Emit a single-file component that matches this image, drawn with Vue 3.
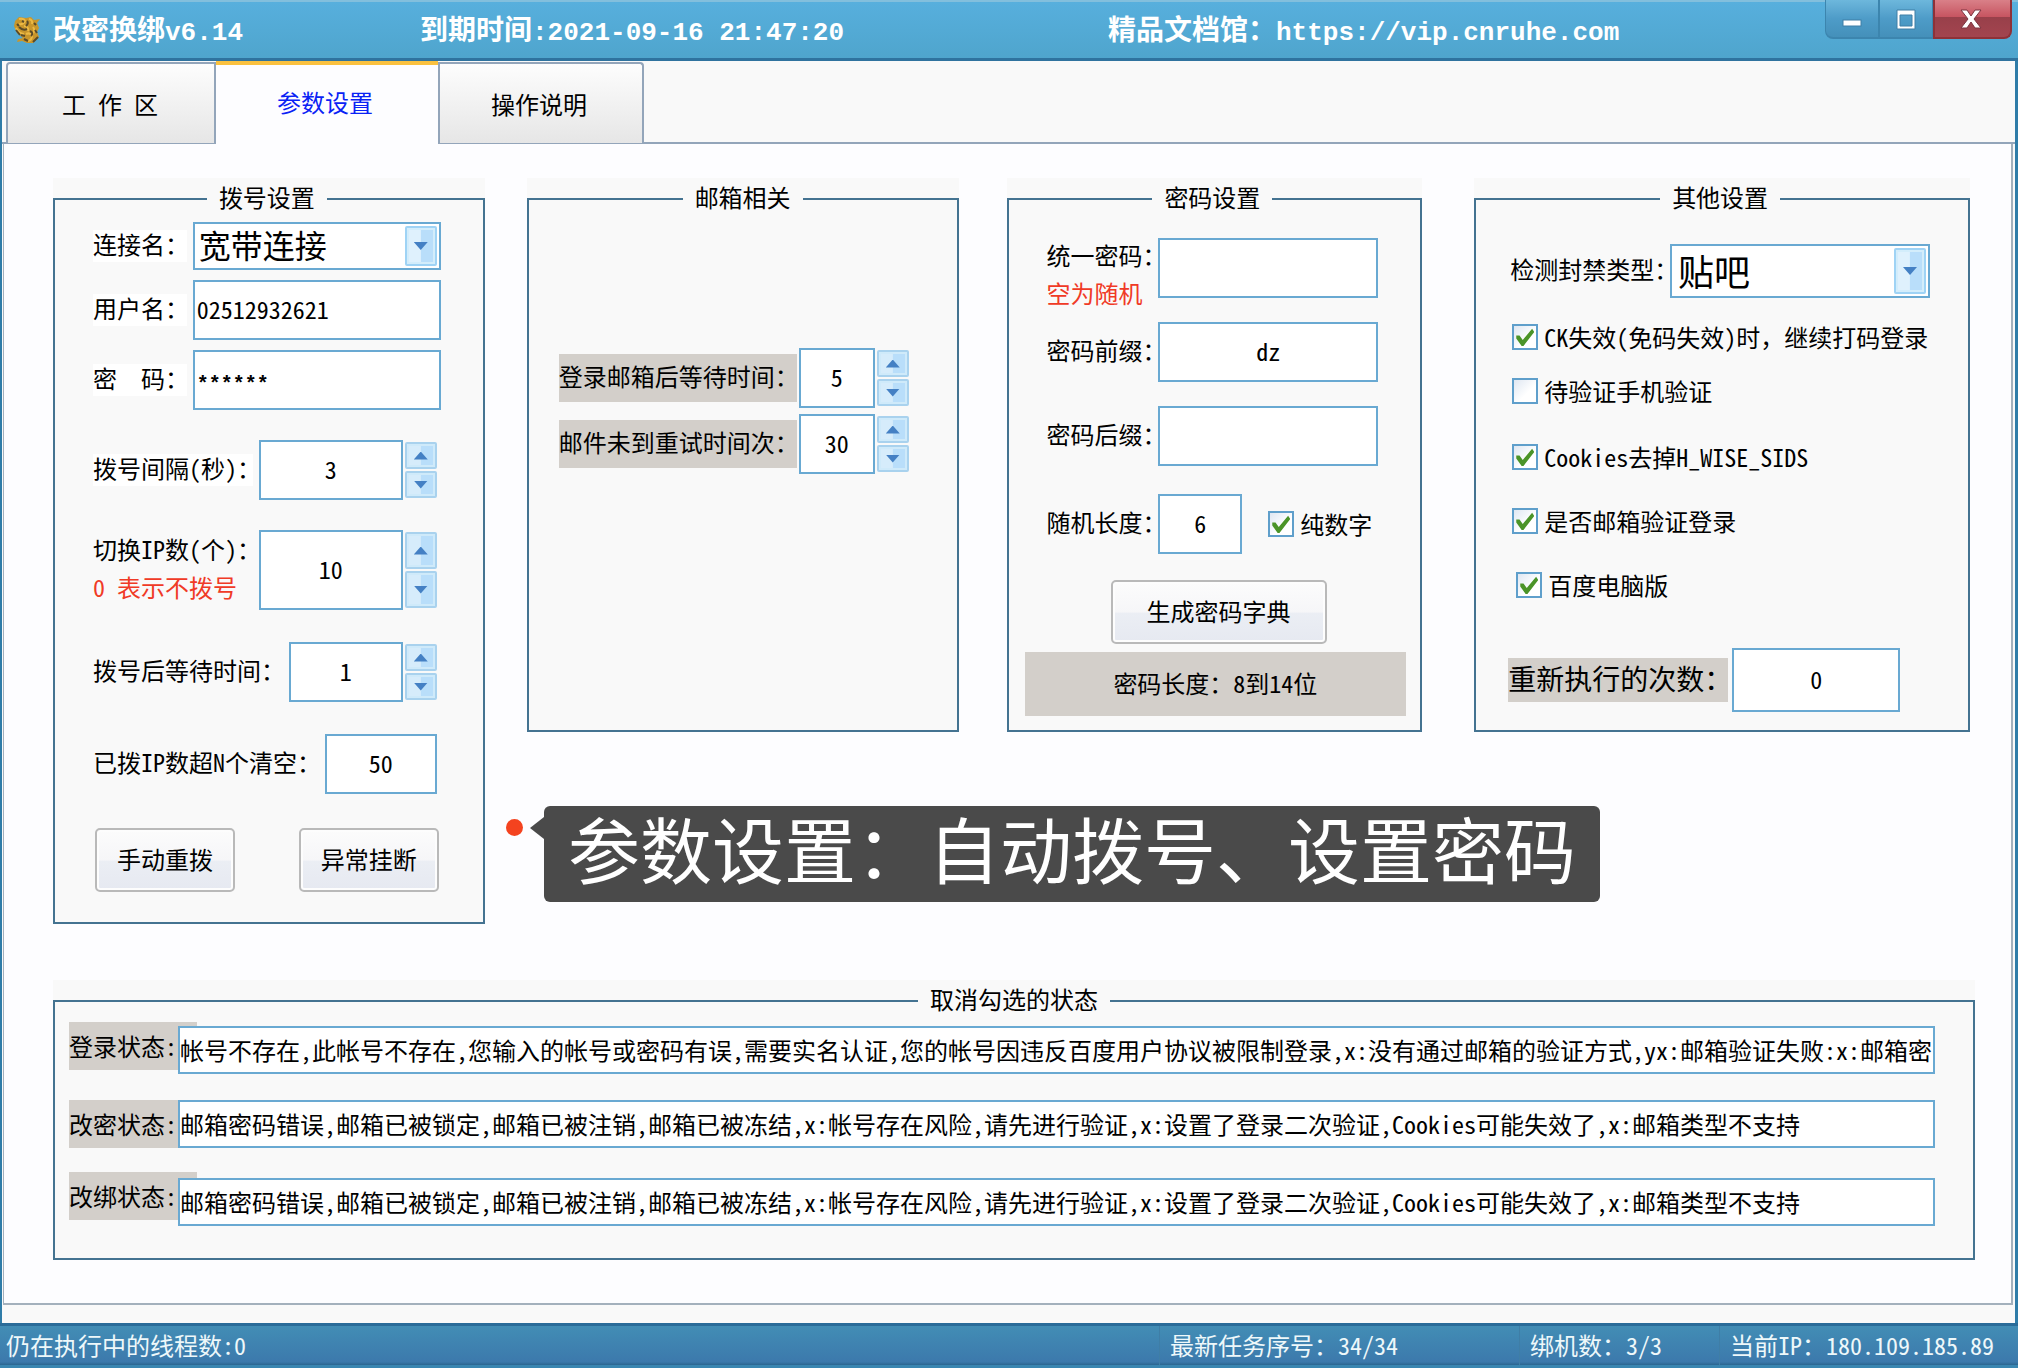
<script setup>
import { ref, reactive } from 'vue'

const tabs = ['工 作 区', '参数设置', '操作说明']
const active = ref(1)

const dial = reactive({
  name: '宽带连接',
  user: '02512932621',
  pass: '******',
  interval: '3',
  switchCount: '10',
  wait: '1',
  clearAfter: '50'
})
const mail = reactive({ wait: '5', retry: '30' })
const pwd = reactive({ same: '', prefix: 'dz', suffix: '', len: '6', digits: true })
const other = reactive({ type: '贴吧', reruns: '0' })
const options = reactive([
  { parts: ['CK失效(免码失效)', '时，继续打码登录'], on: true, mod: 'first' },
  { parts: ['待验证手机验证'], on: false, mod: 'near' },
  { parts: ['Cookies去掉H_WISE_SIDS'], on: true, mod: '' },
  { parts: ['是否邮箱验证登录'], on: true, mod: '' },
  { parts: ['百度电脑版'], on: true, mod: 'inset' }
])
const failText = '邮箱密码错误,邮箱已被锁定,邮箱已被注销,邮箱已被冻结,x:帐号存在风险，请先进行验证,x:设置了登录二次验证,Cookies可能失效了,x:邮箱类型不支持'
const states = reactive([
  {
    label: '登录状态:',
    value: '帐号不存在,此帐号不存在,您输入的帐号或密码有误,需要实名认证,您的帐号因违反百度用户协议被限制登录,x:没有通过邮箱的验证方式,yx:邮箱验证失败:x:邮箱密'
  },
  { label: '改密状态:', value: failText },
  { label: '改绑状态:', value: failText }
])

function step(group, key, by) {
  group[key] = String(Math.max(0, Number(group[key]) + by))
}
</script>

<template>
  <div class="window">
    <header class="titlebar">
      <svg class="logo" viewBox="0 0 28 28" aria-hidden="true">
        <path d="M2 5 L6 1 L13 2 L18 1 L21 4 L27 3 L24 7 L26 12 L24 16 L26 21 L20 27 L14 27 L9 25 L4 26 L5 23 L10 22 L4 17 L1 10 Z" fill="#c8962c" />
        <path d="M6 3 q5-1 6 2 q-2 4-6 3 M16 3 q4 1 3 5 M11 10 q5 0 4 5 M20 11 q3 4-1 7 M13 18 q4-2 6 2 q0 4-4 5 M3 12 q3 6 8 6" fill="none" stroke="#ecb944" stroke-width="2" />
        <path d="M9 5 l2 1 M14 5 q2 2-1 5 M6 11 q4 4 8 2 M17 15 q4 2 1 5 M4 8 l2 2 M21 7 l2 2 M22 14 l2 3 M11 23 l4 2 M8 19 l4 1 M3 14 l4 5 M20 26 l5-5" fill="none" stroke="#5a4a28" stroke-width="2" />
      </svg>
      <h1 class="app-name">改密换绑<span class="mono">v6.14</span></h1>
      <p class="expiry">到期时间<span class="mono">:2021-09-16 21:47:20</span></p>
      <p class="site">精品文档馆：<a class="mono" href="https://vip.cnruhe.com">https://vip.cnruhe.com</a></p>
      <div class="win-buttons">
        <button type="button" aria-label="最小化">
          <svg width="24" height="24" viewBox="0 0 24 24"><rect x="3" y="13" width="18" height="6" fill="#fff" stroke="#3f7fa6" /></svg>
        </button>
        <button type="button" aria-label="最大化">
          <svg width="24" height="24" viewBox="0 0 24 24"><path d="M3 3h18v19H3z M6 8v11h12V8z" fill="#fff" fill-rule="evenodd" stroke="#3f7fa6" /></svg>
        </button>
        <button type="button" class="close" aria-label="关闭">
          <svg width="24" height="24" viewBox="0 0 24 24"><path d="M2 3h6l4 6 4-6h6l-7 9 7 9h-6l-4-6-4 6H2l7-9z" fill="#fff" stroke="#7c3540" /></svg>
        </button>
      </div>
    </header>

    <nav class="tabs">
      <button
        v-for="(t, i) in tabs"
        :key="t"
        type="button"
        class="tab"
        :class="{ active: active === i }"
        @click="active = i"
      >{{ t }}</button>
    </nav>

    <main class="page">
      <div class="columns">
        <section class="panel dial">
          <fieldset>
            <legend>拨号设置</legend>
            <div class="row">
              <label class="lit" for="d-name">连接名：</label>
              <span class="combo w-text">
                <select id="d-name" v-model="dial.name"><option>宽带连接</option></select>
                <span class="drop"></span>
              </span>
            </div>
            <div class="row gap-10">
              <label class="lit" for="d-user">用户名：</label>
              <input id="d-user" v-model="dial.user" class="field w-text" type="text">
            </div>
            <div class="row gap-10">
              <label class="lit full" for="d-pass">密　码：</label>
              <input id="d-pass" v-model="dial.pass" class="field w-text stars" type="text">
            </div>
            <div class="row num gap-30">
              <label class="lit" for="d-int">拨号间隔(秒)：</label>
              <input id="d-int" v-model="dial.interval" class="field center w-144" type="text">
              <span class="spin">
                <button type="button" aria-label="增加" @click="step(dial, 'interval', 1)"></button>
                <button type="button" aria-label="减少" class="down" @click="step(dial, 'interval', -1)"></button>
              </span>
            </div>
            <div class="row num tall gap-30">
              <label class="stack" for="d-sw"><span>切换IP数(个)：</span><span class="red">0 表示不拨号</span></label>
              <input id="d-sw" v-model="dial.switchCount" class="field center w-144" type="text">
              <span class="spin">
                <button type="button" aria-label="增加" @click="step(dial, 'switchCount', 1)"></button>
                <button type="button" aria-label="减少" class="down" @click="step(dial, 'switchCount', -1)"></button>
              </span>
            </div>
            <div class="row num gap-32">
              <label for="d-wait">拨号后等待时间：</label>
              <input id="d-wait" v-model="dial.wait" class="field center w-114" type="text">
              <span class="spin">
                <button type="button" aria-label="增加" @click="step(dial, 'wait', 1)"></button>
                <button type="button" aria-label="减少" class="down" @click="step(dial, 'wait', -1)"></button>
              </span>
            </div>
            <div class="row num gap-32">
              <label for="d-clear">已拨IP数超N个清空：</label>
              <input id="d-clear" v-model="dial.clearAfter" class="field center w-112" type="text">
            </div>
            <div class="row buttons">
              <button type="button" class="btn">手动重拨</button>
              <button type="button" class="btn">异常挂断</button>
            </div>
          </fieldset>
        </section>

        <section class="panel mail">
          <fieldset>
            <legend>邮箱相关</legend>
            <div class="row">
              <label class="grey" for="m-wait">登录邮箱后等待时间：</label>
              <input id="m-wait" v-model="mail.wait" class="field center w-76" type="text">
              <span class="spin">
                <button type="button" aria-label="增加" @click="step(mail, 'wait', 1)"></button>
                <button type="button" aria-label="减少" class="down" @click="step(mail, 'wait', -1)"></button>
              </span>
            </div>
            <div class="row">
              <label class="grey" for="m-retry">邮件未到重试时间次：</label>
              <input id="m-retry" v-model="mail.retry" class="field center w-76" type="text">
              <span class="spin">
                <button type="button" aria-label="增加" @click="step(mail, 'retry', 1)"></button>
                <button type="button" aria-label="减少" class="down" @click="step(mail, 'retry', -1)"></button>
              </span>
            </div>
          </fieldset>
        </section>

        <section class="panel pwd">
          <fieldset>
            <legend>密码设置</legend>
            <div class="row top">
              <label class="stack" for="p-same"><span>统一密码：</span><span class="red">空为随机</span></label>
              <input id="p-same" v-model="pwd.same" class="field center w-220" type="text">
            </div>
            <div class="row gap-24">
              <label for="p-pre">密码前缀：</label>
              <input id="p-pre" v-model="pwd.prefix" class="field center w-220" type="text">
            </div>
            <div class="row gap-24">
              <label for="p-suf">密码后缀：</label>
              <input id="p-suf" v-model="pwd.suffix" class="field center w-220" type="text">
            </div>
            <div class="row gap-28">
              <label for="p-len">随机长度：</label>
              <input id="p-len" v-model="pwd.len" class="field center w-84" type="text">
              <label class="check"><input v-model="pwd.digits" type="checkbox">纯数字</label>
            </div>
            <button type="button" class="btn generate">生成密码字典</button>
            <p class="band">密码长度：8到14位</p>
          </fieldset>
        </section>

        <section class="panel other">
          <fieldset>
            <legend>其他设置</legend>
            <div class="row">
              <label for="o-type">检测封禁类型：</label>
              <span class="combo large">
                <select id="o-type" v-model="other.type"><option>贴吧</option></select>
                <span class="drop"></span>
              </span>
            </div>
            <label v-for="o in options" :key="o.parts[0]" class="check option" :class="o.mod">
              <input v-model="o.on" type="checkbox">
              <span>{{ o.parts[0] }}<span v-if="o.parts[1]" class="full">{{ o.parts[1] }}</span></span>
            </label>
            <div class="row rerun">
              <label class="grey" for="o-re">重新执行的次数：</label>
              <input id="o-re" v-model="other.reruns" class="field center w-168" type="text">
            </div>
          </fieldset>
        </section>
      </div>

      <section class="panel states">
        <fieldset>
          <legend>取消勾选的状态</legend>
          <div v-for="(s, i) in states" :key="s.label" class="state">
            <label class="grey" :for="'state-' + i">{{ s.label }}</label>
            <input :id="'state-' + i" v-model="s.value" class="field" type="text">
          </div>
        </fieldset>
      </section>

      <div class="callout"><i class="dot"></i><i class="arrow"></i>参数设置：自动拨号、设置密码</div>
    </main>

    <footer class="status">
      <span class="threads">仍在执行中的线程数:0</span>
      <span class="cell task">最新任务序号：34/34</span>
      <span class="cell bound">绑机数：3/3</span>
      <span class="cell ip">当前IP：180.109.185.89</span>
    </footer>
  </div>
</template>

<style>
body {
  margin: 0;
}
</style>

<style scoped>
.window,
.window * {
  box-sizing: border-box;
}
.window {
  display: flex;
  flex-direction: column;
  min-height: 100vh;
  border: solid #2f7ca8;
  border-width: 0 3px 0 2px;
  background: #f9f9f9;
  color: #000;
  font: 24px/28px "Noto Sans CJK SC", sans-serif;
  /* Latin letters and digits take half the width of a Chinese character */
  font-feature-settings: "hwid";
}
.full {
  font-feature-settings: normal;
}
h1,
p {
  margin: 0;
}
button,
input,
select {
  margin: 0;
  padding: 0;
  border: 0;
  border-radius: 0;
  color: inherit;
  font: inherit;
  font-feature-settings: inherit;
}

/* title bar */
.titlebar {
  position: relative;
  display: flex;
  align-items: center;
  height: 61px;
  margin: 0 -3px 0 -2px;
  padding-left: 13px;
  border-top: 2px solid #82bfdd;
  border-bottom: 3px solid #2f739f;
  background: linear-gradient(#57afdd, #4fa5cd);
  color: #fff;
  white-space: nowrap;
}
.logo {
  width: 28px;
  height: 28px;
  margin-right: 12px;
}
.app-name,
.expiry,
.site {
  font-size: 28px;
  font-weight: 700;
  line-height: 40px;
}
.app-name {
  flex: 0 0 367px;
}
.expiry {
  flex: 0 0 688px;
}
.mono {
  color: inherit;
  font-family: "Liberation Mono", monospace;
  font-size: 26px;
  text-decoration: none;
}
.win-buttons {
  position: absolute;
  top: -2px;
  right: 6px;
  display: flex;
  height: 39px;
}
.win-buttons button {
  display: flex;
  align-items: center;
  justify-content: center;
  width: 54px;
  border: 1px solid #3c85ae;
  border-width: 0 1px 2px;
  background: linear-gradient(#6db7dc, #4e9cc8 50%, #4490ba);
}
.win-buttons button:first-child {
  border-bottom-left-radius: 8px;
}
.win-buttons .close {
  width: 79px;
  padding-right: 4px;
  border: 2px solid #8e3138;
  border-width: 0 2px 2px;
  border-bottom-right-radius: 8px;
  background: linear-gradient(#d98088, #c75561 45%, #98404a 46%, #a3444f);
}

/* tabs */
.tabs {
  display: flex;
  height: 83px;
  padding-left: 4px;
  border-bottom: 2px solid #93a5ba;
}
.tab {
  width: 206px;
  height: 81px;
  margin-top: 1px;
  padding-right: 4px;
  border: 2px solid #93a5ba;
  border-bottom: 0;
  border-radius: 4px 4px 0 0;
  background: linear-gradient(#fdfdfd, #e6e6e6);
}
.tab:first-child {
  width: 210px;
  padding-right: 2px;
  border-top-right-radius: 0;
}
.tab.active {
  width: 222px;
  height: 83px;
  margin-top: 0;
  padding: 0 4px 6px 0;
  border: 0;
  border-top: 4px solid #fac13f;
  border-radius: 0;
  background: #fdfdff;
  color: #0a22f5;
}
.tab:last-child {
  border-top-left-radius: 0;
}

/* page */
.page {
  position: relative;
  flex: 1;
  margin: 0 2px 18px 1px;
  padding: 34px 36px 40px 49px;
  border: solid #a3b0bc;
  border-width: 0 2px 2px 1px;
  background: #fdfdff;
}
.columns {
  display: flex;
  align-items: flex-start;
  margin-right: 5px;
}
.panel {
  min-width: 0;
  padding-top: 7px;
  background: #f9f9f9;
}
fieldset {
  min-width: 0;
  margin: 0;
  padding: 0;
  border: 2px solid #447391;
}
legend {
  margin: 0 auto;
  padding: 0 12px 4px;
  line-height: 24px;
}
.dial {
  flex: 432 1 0;
}
.mail {
  flex: 432 1 0;
  margin-left: 42px;
}
.pwd {
  flex: 416 1 0;
  margin-left: 48px;
}
.other {
  flex: 496 1 0;
  margin-left: 52px;
}
.dial fieldset {
  padding: 9px 42px 0 38px;
}
.mail fieldset {
  padding: 135px 0 250px;
}
.pwd fieldset {
  padding: 25px 42px 0 38px;
}
.other fieldset {
  padding: 31px 38px 0 34px;
}

.row {
  display: flex;
  align-items: center;
  justify-content: space-between;
  white-space: nowrap;
}
.row.num {
  padding-right: 4px;
}
.gap-10 {
  margin-top: 10px;
}
.gap-24 {
  margin-top: 24px;
}
.gap-28 {
  margin-top: 28px;
}
.gap-30 {
  margin-top: 30px;
}
.gap-32 {
  margin-top: 32px;
}
.row > label:first-child {
  flex: 1 1 0;
  min-width: 0;
  padding-bottom: 4px;
}
.row > .lit:first-child {
  margin-right: 6px;
  background: #fff;
}
.field {
  height: 60px;
  padding: 0 2px 4px;
  border: 2px solid #69a9d2;
  background: #fff;
  outline: 0;
}
.center {
  text-align: center;
}
.stars {
  padding: 8px 2px 0;
  font-family: "Liberation Mono", monospace;
  font-size: 20px;
  font-weight: 700;
}
.w-text {
  width: 248px;
}
.w-76 {
  width: 76px;
}
.w-84 {
  width: 84px;
}
.w-112 {
  width: 112px;
}
.w-114 {
  width: 114px;
}
.w-144 {
  width: 144px;
}
.w-168 {
  width: 168px;
}
.w-220 {
  width: 220px;
}
.red {
  color: #f03a26;
}
.stack span {
  display: block;
  line-height: 38px;
}
.row.tall .field {
  height: 80px;
}
.row.top {
  align-items: flex-start;
  height: 60px;
}
.row.top .stack {
  margin-top: -2px;
}

.combo {
  position: relative;
  height: 48px;
}
.combo select {
  width: 100%;
  height: 100%;
  padding: 0 0 4px 4px;
  border: 2px solid #69a9d2;
  background: #fff;
  appearance: none;
  font-size: 32px;
  line-height: 40px;
}
.combo.large {
  width: 260px;
  height: 54px;
}
.combo.large select {
  padding-left: 6px;
  font-size: 36px;
  line-height: 48px;
}
.drop {
  position: absolute;
  top: 4px;
  right: 4px;
  bottom: 4px;
  width: 32px;
  border: 2px solid #9fd3f5;
  border-radius: 2px;
  background: linear-gradient(90deg, #dff1fd 48%, #b9defa 50%);
  box-shadow: inset 0 0 0 2px #d3edfb;
  pointer-events: none;
}
.drop::after,
.spin button::after {
  content: "";
  position: absolute;
  top: 50%;
  left: 50%;
  width: 14px;
  height: 8px;
  margin: -4px 0 0 -7px;
  background: #4480c4;
  clip-path: polygon(0 0, 100% 0, 50% 100%);
}
.spin {
  display: flex;
  flex-direction: column;
  align-self: stretch;
  gap: 2px;
  width: 34px;
  padding: 2px 0 2px 2px;
}
.spin button {
  position: relative;
  flex: 1;
  border: 2px solid #a9d2ee;
  border-radius: 2px;
  background: linear-gradient(90deg, #d6ecfb 48%, #b9defa 50%);
  box-shadow: inset 0 0 0 2px #cfeafa;
}
.spin button::after {
  clip-path: polygon(0 100%, 50% 0, 100% 100%);
}
.spin .down::after {
  clip-path: polygon(0 0, 100% 0, 50% 100%);
}

.btn {
  width: 140px;
  height: 64px;
  padding-bottom: 2px;
  border: 2px solid #b9b9b9;
  border-radius: 5px;
  background: linear-gradient(#fcfcfc, #f6f6f8 50%, #ebeef4 52%, #e6e9f1);
  box-shadow: inset 0 0 0 2px #fdfdfd;
}
.buttons {
  margin: 34px 0 30px;
  padding: 0 2px;
}
.generate {
  display: block;
  width: 216px;
  margin: 26px 0 0 64px;
}
.band {
  margin: 8px -28px 14px -22px;
  padding: 17px 0 19px;
  background: #d3cfca;
  text-align: center;
}

.grey {
  background: #d3cfca;
}
.mail .row {
  justify-content: flex-start;
  margin-bottom: 6px;
  padding-left: 30px;
}
.mail .row > .grey:first-child {
  flex: 0 0 238px;
  margin-right: 2px;
  line-height: 44px;
}

.check {
  display: flex;
  align-items: center;
  gap: 6px;
  white-space: nowrap;
}
.pwd .row .check {
  flex: none;
  width: 136px;
  padding-left: 26px;
}
.check input {
  position: relative;
  flex: none;
  width: 26px;
  height: 26px;
  border: 2px solid #5f9fcb;
  background: linear-gradient(135deg, #dfe7f2, #fff 60%);
  appearance: none;
}
.check input:checked::before {
  content: "";
  position: absolute;
  inset: 2px;
  background: #4b9428;
  clip-path: polygon(0 42%, 18% 42%, 36% 66%, 88% 4%, 100% 22%, 40% 100%, 30% 100%, 0 58%);
}
.option {
  height: 32px;
  margin: 32px -20px 0 2px;
}
.option.first {
  margin-top: 23px;
}
.option.near {
  margin-top: 22px;
}
.option.near + .option {
  margin-top: 34px;
}
.option.inset {
  margin-left: 6px;
}
.rerun {
  justify-content: flex-start;
  margin: 47px 0 18px -2px;
}
.rerun > .grey:first-child {
  flex: 0 0 220px;
  margin-right: 4px;
  font-size: 28px;
  line-height: 40px;
}
.rerun .field {
  height: 64px;
}

/* status texts that clear a tick */
.states {
  margin-top: 56px;
}
.states fieldset {
  padding: 7px 0 32px;
}
.state {
  display: flex;
  align-items: flex-start;
  padding: 0 38px 0 14px;
}
.state .grey {
  flex: 0 0 128px;
  margin-right: -19px;
  line-height: 48px;
}
.state .field {
  position: relative;
  flex: 1;
  min-width: 0;
  height: 48px;
  padding: 0 0 2px;
}
.state:nth-of-type(1) .field {
  margin-top: 4px;
}
.state:nth-of-type(2) {
  margin: 26px 0 24px;
}
.state:nth-of-type(3) .field {
  margin-top: 6px;
}

.callout {
  position: absolute;
  top: 662px;
  left: 540px;
  padding: 0 24px 14px;
  border-radius: 6px;
  background: #4a4a4a;
  color: #fff;
  font-size: 72px;
  line-height: 82px;
  white-space: nowrap;
}
.dot {
  position: absolute;
  top: 13px;
  left: -38px;
  width: 17px;
  height: 17px;
  border-radius: 50%;
  background: #f4431f;
}
.arrow {
  position: absolute;
  top: 11px;
  left: -14px;
  width: 14px;
  height: 22px;
  background: #4a4a4a;
  clip-path: polygon(100% 0, 100% 100%, 0 50%);
}

/* status bar */
.status {
  display: flex;
  height: 45px;
  margin: 0 -3px 0 -2px;
  border-top: 3px solid #2b6c99;
  border-bottom: 3px solid #3a86b1;
  background: linear-gradient(#428db5, #3c79ac 92%, #2b6690);
  color: #eef8fa;
  line-height: 38px;
  white-space: nowrap;
}
.threads {
  flex: 1;
  padding-left: 6px;
}
.cell {
  padding-left: 10px;
  border-left: 1px solid #3f7ea6;
}
.task {
  width: 360px;
}
.bound {
  width: 200px;
}
.ip {
  width: 299px;
}
</style>
